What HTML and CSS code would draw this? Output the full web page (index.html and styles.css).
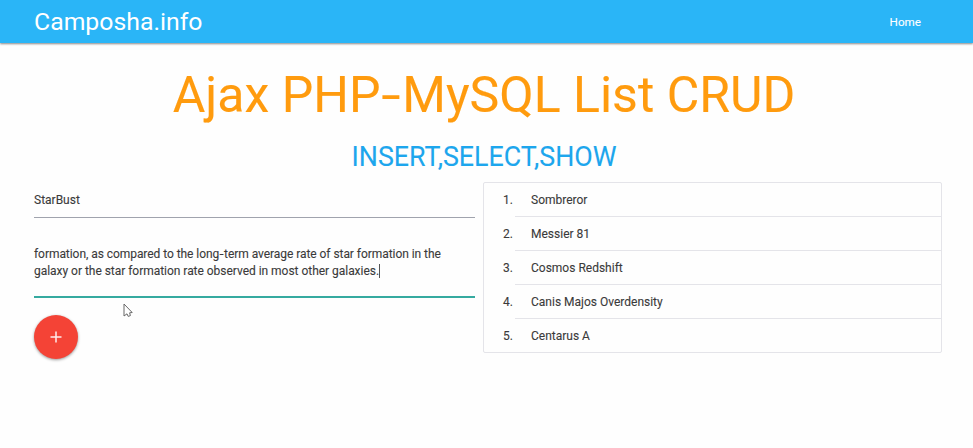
FILE: index.html
```html
<!DOCTYPE html>
<html lang="en">
<head>
<meta charset="utf-8">
<title>Camposha.info</title>
<link rel="stylesheet" href="styles.css">
</head>
<body>
<nav class="navbar"><a class="brand">Camposha.info</a><a class="home">Home</a></nav>
<main>
<h1>Ajax PHP<span class="hyphen">-</span>MySQL List CRUD</h1>
<h2>INSERT,SELECT,SHOW</h2>
<div class="columns">
<form class="entry">
<div class="field name">StarBust</div>
<div class="field description"><span class="first-line">formation, as compared to the long<span class="hyphen">-</span>term average rate of star formation in the</span><br>galaxy or the star formation rate observed in most other galaxies.<span class="caret"></span></div>
<button class="add" type="button" aria-label="Add"><svg viewBox="0 0 12 12" width="12" height="12"><path d="M6 .5v11M.5 6h11" stroke="#fff" stroke-opacity=".9" stroke-width="1.5"/></svg></button>
</form>
<ol class="list">
<li><span class="number">1.</span><span class="item">Sombreror</span></li>
<li><span class="number">2.</span><span class="item">Messier 81</span></li>
<li><span class="number">3.</span><span class="item">Cosmos Redshift</span></li>
<li><span class="number">4.</span><span class="item">Canis Majos Overdensity</span></li>
<li><span class="number">5.</span><span class="item">Centarus A</span></li>
</ol>
</div>
</main>
<svg class="pointer" viewBox="0 0 10 15" width="10" height="15"><path d="M1 1v12l3-2.2 1.2 2.6 2.2-.8-.8-2.8 2.6-.3z" fill="#fff" stroke="#686868" stroke-width="1"/></svg>
</body>
</html>
```
FILE: styles.css
```css
* { box-sizing: border-box; }
body { margin: 0; height: 448px; overflow: hidden; background: #fefefe; color: #3a3a3a; font: 12px/17px Roboto, sans-serif; -webkit-text-stroke: .1px; }
.navbar { height: 43px; padding: 0 52px 0 34px; display: flex; justify-content: space-between; align-items: center; background: #2ab5f7; color: #fff; box-shadow: 0 1px 2px #0007; }
.brand { font-size: 24.8px; line-height: 43px; -webkit-text-stroke: 0; }
.home { padding-top: 1px; font-size: 11.7px; }
main { padding: 0 31px 0 34px; }
h1, h2 { margin: 0; padding-right: 8px; text-align: center; font-weight: 400; }
h1 { height: 87px; padding-top: 22px; font-size: 50px; line-height: 60px; color: #ff9b0e; }
h2 { height: 52px; padding-top: 10px; font-size: 26.8px; line-height: 34px; color: #1da6ed; }
.hyphen { display: inline-block; transform: scaleX(1.25); }
h1 .hyphen { margin: 0 4px; }
.columns { display: grid; grid-template-columns: 441px 459px; gap: 8px; }
.name { height: 36px; padding-top: 10px; border-bottom: 1px solid #a0a3ad; }
.description { height: 80px; padding-top: 28px; border-bottom: 2px solid #35aaa0; white-space: nowrap; letter-spacing: -.03px; }
.first-line { letter-spacing: -.055px; }
.description .hyphen { margin: 0 .8px; }
.caret { display: inline-block; width: 1px; height: 14px; background: #555; vertical-align: -3px; }
.add { width: 44px; height: 44px; margin-top: 17px; padding: 0; border: 0; border-radius: 50%; background: #f44336; box-shadow: 0 1px 3px #0006; display: flex; align-items: center; justify-content: center; }
h1 .hyphen { transform: scaleX(1.4); }
.list { height: 171px; margin: 0; padding: 0; list-style: none; border: 1px solid #e4e4e9; border-radius: 2px; }
.list li { height: 34px; display: flex; line-height: 34px; }
.number { width: 31px; padding-left: 19px; }
.item { flex: 1; padding-left: 16px; border-bottom: 1px solid #e4e4e9; }
.list li:last-child .item { border: 0; }
.pointer { position: absolute; left: 123px; top: 303px; }
```
